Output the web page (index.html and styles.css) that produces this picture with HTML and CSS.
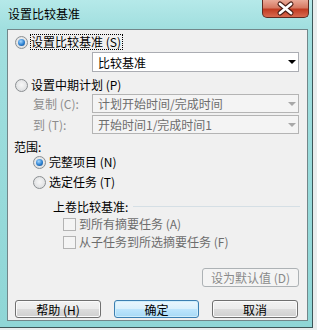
FILE: index.html
```html
<!DOCTYPE html>
<html lang="zh">
<head>
    <meta charset="UTF-8">
    <title>设置比较基准</title>
    <link rel="stylesheet" href="styles.css">
</head>
<body>
    <div class="window">
        <div class="titlebar">
            <span class="title">设置比较基准</span>
            <div class="close">
                <svg width="45" height="17" viewBox="0 0 45 17">
                    <path d="M17 4 L28 13 M28 4 L17 13" stroke="#4b1f17" stroke-width="5" stroke-linecap="round" fill="none"/>
                    <path d="M17 4 L28 13 M28 4 L17 13" stroke="#ffffff" stroke-width="2.8" stroke-linecap="round" fill="none"/>
                </svg>
            </div>
        </div>
        <div class="panel">
            <div class="row opt-s">
                <span class="radio on"></span>
                <span class="label focus">设置比较基准 (<u>S</u>)</span>
            </div>
            <div class="combo combo-main">
                <span>比较基准</span>
                <span class="arrow"></span>
            </div>
            <div class="row opt-p">
                <span class="radio"></span>
                <span class="label">设置中期计划 (<u>P</u>)</span>
            </div>
            <div class="field field-copy">
                <span class="field-label">复制 (<u>C</u>):</span>
                <div class="combo disabled">
                    <span>计划开始时间/完成时间</span>
                    <span class="arrow"></span>
                </div>
            </div>
            <div class="field field-to">
                <span class="field-label">到 (<u>T</u>):</span>
                <div class="combo disabled">
                    <span>开始时间1/完成时间1</span>
                    <span class="arrow"></span>
                </div>
            </div>
            <div class="scope-title">范围:</div>
            <div class="row opt-n">
                <span class="radio on"></span>
                <span class="label">完整项目 (<u>N</u>)</span>
            </div>
            <div class="row opt-t">
                <span class="radio"></span>
                <span class="label">选定任务 (<u>T</u>)</span>
            </div>
            <div class="row rollup">
                <span>上卷比较基准:</span>
                <span class="rule"></span>
            </div>
            <div class="row check-row">
                <span class="checkbox"></span>
                <span class="label muted">到所有摘要任务 (<u>A</u>)</span>
            </div>
            <div class="row check-row">
                <span class="checkbox"></span>
                <span class="label muted">从子任务到所选摘要任务 (<u>F</u>)</span>
            </div>
            <div class="default-row">
                <div class="btn btn-default">设为默认值 (<u>D</u>)</div>
            </div>
            <div class="actions">
                <div class="btn btn-help">帮助 (<u>H</u>)</div>
                <div class="btn btn-primary">确定</div>
                <div class="btn">取消</div>
            </div>
        </div>
    </div>
</body>
</html>
```

FILE: styles.css
```css
body {
    margin: 0;
    width: 317px;
    height: 330px;
    overflow: hidden;
    background: #e9eded;
    font-family: "Noto Sans CJK SC", "Liberation Sans", sans-serif;
    font-size: 12px;
    color: #000;
}
u {
    text-decoration: none;
}
.window {
    width: 313px;
    height: 328px;
    box-sizing: border-box;
    border-right: 1px solid #3d5759;
    border-bottom: 1px solid #3d5759;
    background: linear-gradient(#b5e9e9, #a1dfdf 28px, #8fd6d6);
    display: flex;
    flex-direction: column;
}
.titlebar {
    height: 29px;
    flex-shrink: 0;
    display: flex;
    justify-content: space-between;
    align-items: flex-start;
}
.title {
    padding-left: 8px;
    line-height: 27px;
}
.close {
    width: 47px;
    height: 18px;
    margin-right: 3px;
    box-sizing: border-box;
    border: 1px solid #5e2b21;
    border-top: none;
    border-radius: 0 0 5px 5px;
    background: linear-gradient(#eaaa98, #d67a63 45%, #c13c22 55%, #d86a50);
    display: flex;
    align-items: center;
    justify-content: center;
}
.panel {
    margin: 0 4px 0 7px;
    height: 292px;
    box-sizing: border-box;
    border: 1px solid #72878a;
    background: #f0f0f0;
    display: flex;
    flex-direction: column;
}
.row {
    display: flex;
    align-items: center;
    height: 18px;
    flex-shrink: 0;
}
.radio {
    width: 13px;
    height: 13px;
    box-sizing: border-box;
    border-radius: 50%;
    border: 1px solid #8b8f92;
    background: radial-gradient(circle at 50% 45%, #f7f7f7, #d6d8da);
    display: flex;
    align-items: center;
    justify-content: center;
    margin-right: 3px;
    flex-shrink: 0;
}
.radio.on::after {
    content: "";
    width: 7px;
    height: 7px;
    border-radius: 50%;
    background: radial-gradient(circle at 40% 35%, #a6d8ff, #2a7fd0 55%, #0f3f78);
}
.checkbox {
    width: 13px;
    height: 13px;
    box-sizing: border-box;
    border: 1px solid #b3b3b3;
    background: #f4f4f4;
    margin-right: 3px;
    flex-shrink: 0;
}
.label {
    line-height: 14px;
}
.focus {
    border: 1px dotted #000;
    margin-left: -1px;
    padding: 0 1px 0 0;
}
.muted {
    color: #6d6d6d;
}
.opt-s {
    margin-top: 3px;
    padding-left: 7px;
}
.combo {
    width: 207px;
    height: 20px;
    box-sizing: border-box;
    border: 1px solid #abadb3;
    background: #fff;
    display: flex;
    align-items: center;
    justify-content: space-between;
    padding: 0 2px 0 5px;
    flex-shrink: 0;
}
.combo.disabled {
    height: 19px;
    background: #f4f4f4;
    border-color: #b4b4b4;
    color: #6d6d6d;
}
.arrow {
    width: 0;
    height: 0;
    border-left: 4px solid transparent;
    border-right: 4px solid transparent;
    border-top: 4px solid #000;
}
.combo.disabled .arrow {
    border-top-color: #a8a8a8;
}
.combo-main {
    margin: 1px 0 0 84px;
}
.opt-p {
    margin-top: 4px;
    padding-left: 7px;
}
.field {
    display: flex;
    align-items: center;
    height: 19px;
    padding-left: 25px;
    flex-shrink: 0;
}
.field-label {
    width: 59px;
    color: #8d8d8d;
}
.field-to {
    margin-top: 2px;
}
.scope-title {
    margin-top: 6px;
    height: 13px;
    line-height: 13px;
    padding-left: 6px;
}
.opt-n {
    padding-left: 25px;
}
.opt-t {
    margin-top: 2px;
    padding-left: 25px;
}
.rollup {
    margin-top: 6px;
    padding-left: 45px;
}
.rule {
    flex: 1;
    height: 1px;
    margin: 0 7px 0 5px;
    background: #d5dfe5;
}
.check-row {
    padding-left: 55px;
}
.default-row {
    margin-top: 17px;
    display: flex;
    justify-content: flex-end;
    padding-right: 8px;
}
.btn {
    width: 86px;
    height: 18px;
    box-sizing: border-box;
    border: 1px solid #707070;
    border-radius: 3px;
    background: linear-gradient(#f2f2f2, #ebebeb 50%, #dddddd 50%, #cfcfcf);
    box-shadow: inset 0 0 0 1px #fbfbfb;
    display: flex;
    align-items: center;
    justify-content: center;
}
.btn-default {
    width: 97px;
    height: 19px;
    border-color: #adb2b5;
    background: #f4f4f4;
    box-shadow: none;
    color: #8a8a8a;
}
.btn-primary {
    width: 85px;
    border-color: #3c7fb1;
    background: linear-gradient(#eaf6fd, #d9f0fc 50%, #bee6fd 50%, #a7d9f5);
    box-shadow: inset 0 0 0 1px #cfeefc;
}
.actions {
    margin-top: 13px;
    display: flex;
    gap: 13px;
    padding-left: 7px;
}
```
